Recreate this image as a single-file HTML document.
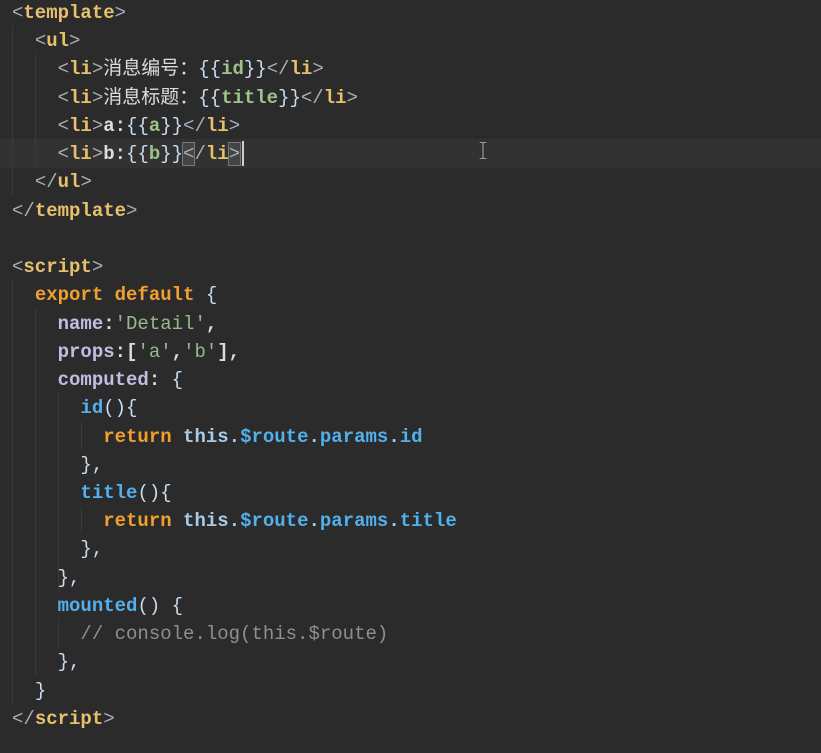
<!DOCTYPE html>
<html><head><meta charset="utf-8"><style>
html,body{margin:0;padding:0;background:#2b2b2b;width:821px;height:753px;overflow:hidden;position:relative}
pre{position:absolute;left:12px;top:-1px;margin:0;font-family:"Liberation Mono","Noto Sans CJK SC",monospace;font-size:19px;line-height:28.24px;color:#d4d4d4;font-weight:bold;white-space:pre;z-index:2}
.t{color:#e8c06c}.p{color:#a8afb8;font-weight:normal}.w{color:#dcdcdc}.cj{color:#dcdcdc;font-weight:normal}
.br{color:#c8dcef;font-weight:normal}.g{color:#9cc48a}.s{color:#98b88a;font-weight:normal}
.k{color:#f0a02c}.th{color:#a8cbe8}.b{color:#52b0ec}.pr{color:#c2bde0}.c{color:#8f8f8f;font-weight:normal}
.hl{position:absolute;left:0;top:139px;width:821px;height:29px;background:#323232;z-index:0}
.gd{position:absolute;width:1px;background:#3a3a3a;z-index:1}
.box{outline:1px solid #777;background:#444}
.cur{position:absolute;left:242px;top:141px;width:2px;height:25px;background:#d0d0d0;z-index:3}
</style></head><body>
<div class="hl"></div>
<div class="gd" style="left:12px;top:26px;height:170px"></div>
<div class="gd" style="left:12px;top:280px;height:425px"></div>
<div class="gd" style="left:35px;top:54px;height:114px"></div>
<div class="gd" style="left:35px;top:308px;height:369px"></div>
<div class="gd" style="left:58px;top:392px;height:200px"></div>
<div class="gd" style="left:58px;top:618px;height:30px"></div>
<div class="gd" style="left:81px;top:422px;height:28px"></div>
<div class="gd" style="left:81px;top:506px;height:28px"></div>
<div class="cur"></div>
<svg style="position:absolute;left:478px;top:141px;z-index:3" width="10" height="19" viewBox="0 0 10 19"><path d="M1 1.5H9M5 1.5V17.5M1 17.5H9" stroke="#222" stroke-width="3" fill="none"/><path d="M1.5 1.5H8.5M5 1.5V17.5M1.5 17.5H8.5" stroke="#9a9a9a" stroke-width="1.3" fill="none"/></svg>
<pre><span class="p">&lt;</span><span class="t">template</span><span class="p">&gt;</span>
  <span class="p">&lt;</span><span class="t">ul</span><span class="p">&gt;</span>
    <span class="p">&lt;</span><span class="t">li</span><span class="p">&gt;</span><span class="cj">消息编号：</span><span class="br">{{</span><span class="g">id</span><span class="br">}}</span><span class="p">&lt;/</span><span class="t">li</span><span class="p">&gt;</span>
    <span class="p">&lt;</span><span class="t">li</span><span class="p">&gt;</span><span class="cj">消息标题：</span><span class="br">{{</span><span class="g">title</span><span class="br">}}</span><span class="p">&lt;/</span><span class="t">li</span><span class="p">&gt;</span>
    <span class="p">&lt;</span><span class="t">li</span><span class="p">&gt;</span><span class="w">a:</span><span class="br">{{</span><span class="g">a</span><span class="br">}}</span><span class="p">&lt;/</span><span class="t">li</span><span class="p">&gt;</span>
    <span class="p">&lt;</span><span class="t">li</span><span class="p">&gt;</span><span class="w">b:</span><span class="br">{{</span><span class="g">b</span><span class="br">}}</span><span class="p box">&lt;</span><span class="p">/</span><span class="t">li</span><span class="p box">&gt;</span>
  <span class="p">&lt;/</span><span class="t">ul</span><span class="p">&gt;</span>
<span class="p">&lt;/</span><span class="t">template</span><span class="p">&gt;</span>

<span class="p">&lt;</span><span class="t">script</span><span class="p">&gt;</span>
  <span class="k">export default</span> <span class="br">{</span>
    <span class="pr">name</span><span class="w">:</span><span class="s">'Detail'</span><span class="w">,</span>
    <span class="pr">props</span><span class="w">:[</span><span class="s">'a'</span><span class="w">,</span><span class="s">'b'</span><span class="w">],</span>
    <span class="pr">computed</span><span class="w">:</span> <span class="br">{</span>
      <span class="b">id</span><span class="br">(){</span>
        <span class="k">return</span> <span class="th">this.</span><span class="b">$route</span><span class="th">.</span><span class="b">params</span><span class="th">.</span><span class="b">id</span>
      <span class="br">},</span>
      <span class="b">title</span><span class="br">(){</span>
        <span class="k">return</span> <span class="th">this.</span><span class="b">$route</span><span class="th">.</span><span class="b">params</span><span class="th">.</span><span class="b">title</span>
      <span class="br">},</span>
    <span class="br">},</span>
    <span class="b">mounted</span><span class="br">()</span> <span class="br">{</span>
      <span class="c">// console.log(this.$route)</span>
    <span class="br">},</span>
  <span class="br">}</span>
<span class="p">&lt;/</span><span class="t">script</span><span class="p">&gt;</span></pre>
</body></html>
